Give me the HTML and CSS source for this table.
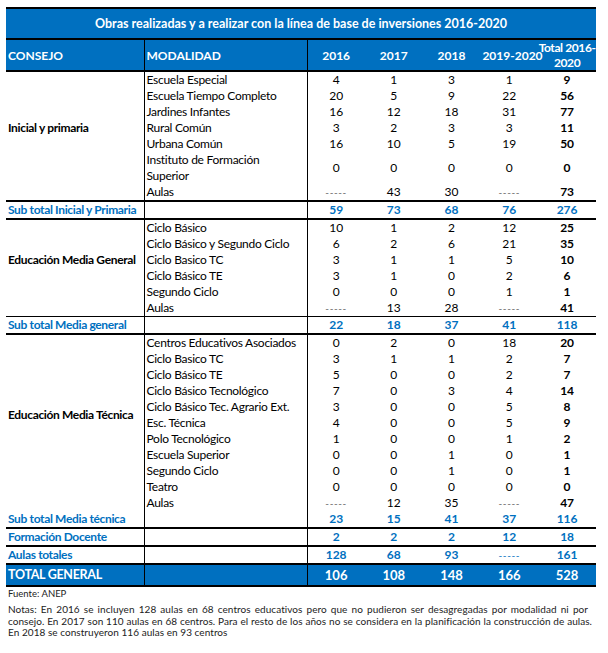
FILE: index.html
```html
<!DOCTYPE html>
<html lang="es">
<head>
<meta charset="utf-8">
<title>Obras realizadas</title>
<link rel="stylesheet" href="styles.css">
</head>
<body>
<table class="grid">
  <colgroup>
    <col class="c-consejo"><col class="c-mod"><col class="c-num"><col class="c-num"><col class="c-num"><col class="c-num"><col class="c-num">
  </colgroup>
  <thead>
    <tr><td class="title" colspan="7">Obras realizadas y a realizar con la línea de base de inversiones 2016-2020</td></tr>
    <tr class="head">
      <th class="left vl">CONSEJO</th>
      <th class="left vl">MODALIDAD</th>
      <th>2016</th><th>2017</th><th>2018</th><th>2019-2020</th><th class="total-h">Total 2016-<br>2020</th>
    </tr>
  </thead>
  <tbody>
    <tr><td class="group vl" rowspan="6">Inicial y primaria</td><td class="mod vl">Escuela Especial</td><td>4</td><td>1</td><td>3</td><td>1</td><td class="tot">9</td></tr>
    <tr><td class="mod vl">Escuela Tiempo Completo</td><td>20</td><td>5</td><td>9</td><td>22</td><td class="tot">56</td></tr>
    <tr><td class="mod vl">Jardines Infantes</td><td>16</td><td>12</td><td>18</td><td>31</td><td class="tot">77</td></tr>
    <tr><td class="mod vl">Rural Común</td><td>3</td><td>2</td><td>3</td><td>3</td><td class="tot">11</td></tr>
    <tr><td class="mod vl">Urbana Común</td><td>16</td><td>10</td><td>5</td><td>19</td><td class="tot">50</td></tr>
    <tr><td class="mod vl">Instituto de Formación<br>Superior</td><td>0</td><td>0</td><td>0</td><td>0</td><td class="tot">0</td></tr>
    <tr><td class="vl"></td><td class="mod vl">Aulas</td><td class="dash">-----</td><td>43</td><td>30</td><td class="dash">-----</td><td class="tot">73</td></tr>
    <tr class="sub top2 bot2"><td class="label vl">Sub total Inicial y Primaria</td><td class="vl"></td><td>59</td><td>73</td><td>68</td><td>76</td><td>276</td></tr>

    <tr><td class="group vl" rowspan="5">Educación Media General</td><td class="mod vl">Ciclo Básico</td><td>10</td><td>1</td><td>2</td><td>12</td><td class="tot">25</td></tr>
    <tr><td class="mod vl">Ciclo Básico y Segundo Ciclo</td><td>6</td><td>2</td><td>6</td><td>21</td><td class="tot">35</td></tr>
    <tr><td class="mod vl">Ciclo Basico TC</td><td>3</td><td>1</td><td>1</td><td>5</td><td class="tot">10</td></tr>
    <tr><td class="mod vl">Ciclo Básico TE</td><td>3</td><td>1</td><td>0</td><td>2</td><td class="tot">6</td></tr>
    <tr><td class="mod vl">Segundo Ciclo</td><td>0</td><td>0</td><td>0</td><td>1</td><td class="tot">1</td></tr>
    <tr><td class="vl"></td><td class="mod vl">Aulas</td><td class="dash">-----</td><td>13</td><td>28</td><td class="dash">-----</td><td class="tot">41</td></tr>
    <tr class="sub top1 bot2"><td class="label vl">Sub total Media general</td><td class="vl"></td><td>22</td><td>18</td><td>37</td><td>41</td><td>118</td></tr>

    <tr><td class="group vl" rowspan="10">Educación Media Técnica</td><td class="mod vl">Centros Educativos Asociados</td><td>0</td><td>2</td><td>0</td><td>18</td><td class="tot">20</td></tr>
    <tr><td class="mod vl">Ciclo Basico TC</td><td>3</td><td>1</td><td>1</td><td>2</td><td class="tot">7</td></tr>
    <tr><td class="mod vl">Ciclo Básico TE</td><td>5</td><td>0</td><td>0</td><td>2</td><td class="tot">7</td></tr>
    <tr><td class="mod vl">Ciclo Básico Tecnológico</td><td>7</td><td>0</td><td>3</td><td>4</td><td class="tot">14</td></tr>
    <tr><td class="mod vl">Ciclo Básico Tec. Agrario Ext.</td><td>3</td><td>0</td><td>0</td><td>5</td><td class="tot">8</td></tr>
    <tr><td class="mod vl">Esc. Técnica</td><td>4</td><td>0</td><td>0</td><td>5</td><td class="tot">9</td></tr>
    <tr><td class="mod vl">Polo Tecnológico</td><td>1</td><td>0</td><td>0</td><td>1</td><td class="tot">2</td></tr>
    <tr><td class="mod vl">Escuela Superior</td><td>0</td><td>0</td><td>1</td><td>0</td><td class="tot">1</td></tr>
    <tr><td class="mod vl">Segundo Ciclo</td><td>0</td><td>0</td><td>1</td><td>0</td><td class="tot">1</td></tr>
    <tr><td class="mod vl">Teatro</td><td>0</td><td>0</td><td>0</td><td>0</td><td class="tot">0</td></tr>
    <tr><td class="vl"></td><td class="mod vl">Aulas</td><td class="dash">-----</td><td>12</td><td>35</td><td class="dash">-----</td><td class="tot">47</td></tr>
    <tr class="sub bot2"><td class="label vl">Sub total Media técnica</td><td class="vl"></td><td>23</td><td>15</td><td>41</td><td>37</td><td>116</td></tr>

    <tr class="sub bot2"><td class="label vl">Formación Docente</td><td class="vl"></td><td>2</td><td>2</td><td>2</td><td>12</td><td>18</td></tr>
    <tr class="sub bot2"><td class="label vl">Aulas totales</td><td class="vl"></td><td>128</td><td>68</td><td>93</td><td class="dash">-----</td><td>161</td></tr>
    <tr class="grand bot2"><td class="label vl">TOTAL GENERAL</td><td class="vl"></td><td>106</td><td>108</td><td>148</td><td>166</td><td>528</td></tr>
  </tbody>
</table>
<div class="notes">
  <p class="source">Fuente: ANEP</p>
  <p class="note">
    <span class="line l1">Notas: En 2016 se incluyen 128 aulas en 68 centros educativos pero que no pudieron ser desagregadas por modalidad ni por</span>
    <span class="line l2">consejo. En 2017 son 110 aulas en 68 centros. Para el resto de los años no se considera en la planificación la construcción de aulas.</span>
    <span class="line">En 2018 se construyeron 116 aulas en 93 centros</span>
  </p>
</div>
</body>
</html>
```
FILE: styles.css
```css
html, body {
  background: #ffffff;
}
body {
  margin: 7px 0 0 6px;
  font-family: Lato, "Liberation Sans", sans-serif;
  color: #000;
}
.grid {
  border-collapse: collapse;
  table-layout: fixed;
  width: 590px;
  font-size: 12px;
}
.c-consejo { width: 138px; }
.c-mod { width: 163px; }
.c-num { width: 57.8px; }

.grid td, .grid th {
  padding: 0 2px;
  height: 16px;
  line-height: 16px;
  text-align: center;
  white-space: nowrap;
  font-weight: normal;
}
.grid td.title {
  background: #0070c0;
  color: #fff;
  font-weight: 700;
  font-size: 12.5px;
  height: 29px;
  line-height: 29px;
  border-top: 2px solid #000;
  border-bottom: 2px solid #000;
}
.head th {
  background: #0070c0;
  color: #fff;
  font-weight: 700;
  height: 30px;
  line-height: 15px;
  border-bottom: 2px solid #000;
}
.head th.total-h {
  padding: 0;
  letter-spacing: -0.4px;
}
.grid .left, .grid .mod, .grid .group {
  text-align: left;
}
.grid .mod {
  letter-spacing: -0.28px;
}
.grid .vl {
  border-right: 1px solid #000;
}
.grid .group {
  font-weight: 700;
  vertical-align: middle;
  letter-spacing: -0.35px;
}
.grid .tot {
  font-weight: 700;
}
.grid .dash {
  color: #666;
  font-size: 10px;
  letter-spacing: 0.6px;
}
.sub td {
  color: #0070c0;
  font-weight: 700;
  text-align: center;
}
.grid .label {
  text-align: left;
  letter-spacing: -0.35px;
}
.grid .sub .dash {
  color: #0070c0;
  font-weight: 400;
}
.top2 td { border-top: 2px solid #000; }
.top1 td { border-top: 1px solid #000; }
.bot2 td { border-bottom: 2px solid #000; }
.grand td {
  background: #0070c0;
  color: #fff;
  font-weight: 700;
  font-size: 13px;
  height: 20px;
  line-height: 20px;
}
.grid .grand .label {
  font-size: 12.5px;
  letter-spacing: -0.3px;
}
.notes {
  font-size: 10px;
  color: #222;
}
.notes p {
  margin: 0;
}
.source {
  padding-left: 2px;
  line-height: 14px;
  font-size: 9.5px;
}
.note {
  padding-left: 2px;
  margin-top: 3px !important;
  line-height: 11.7px;
}
.line {
  display: block;
  white-space: nowrap;
  letter-spacing: 0.05px;
}
.l1 {
  width: 580px;
  text-align: justify;
  text-align-last: justify;
  white-space: normal;
}
.l2 {
  width: 584px;
  text-align: justify;
  text-align-last: justify;
  white-space: normal;
}
```
